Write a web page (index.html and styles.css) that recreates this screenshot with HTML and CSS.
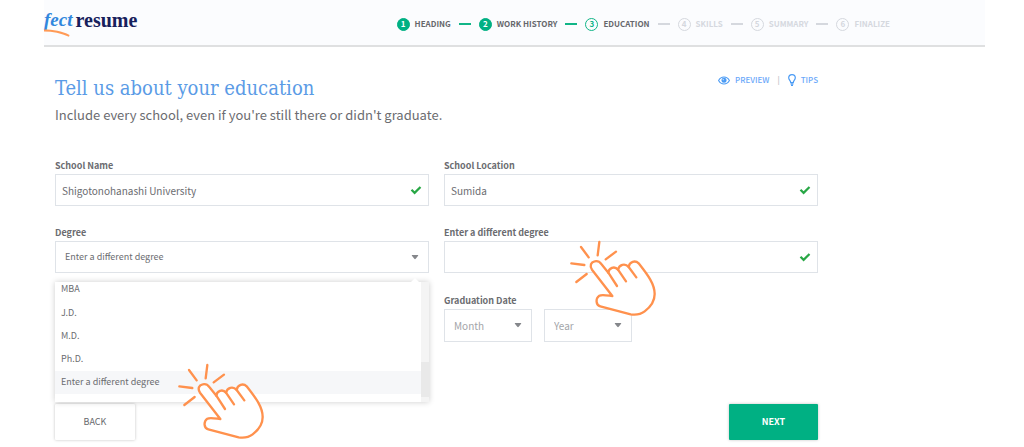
FILE: index.html
```html
<!DOCTYPE html>
<html lang="en">
<head>
<meta charset="utf-8">
<meta name="viewport" content="width=device-width, initial-scale=1">
<title>Tell us about your education</title>
<link rel="stylesheet" href="styles.css">
</head>
<body>
<svg class="sprite" aria-hidden="true">
  <symbol id="check" viewBox="0 0 12 10"><path d="M1.5 4.8 4.6 7.9 10.5 2" fill="none" stroke="#28a745" stroke-width="2.2"/></symbol>
  <symbol id="tap" viewBox="0 0 330 285">
    <g stroke="#ff914d" stroke-width="7" stroke-linecap="round" stroke-linejoin="round" fill="none">
      <path d="M118 36 113 76M63 51 86 82M168 65 137 88M34 100 73 105M80 132 49 156"/>
      <path fill="#fff" d="M157 198 96 119C88 107 93 96 104 94C112 92 119 95 124 102L145 128C146 115 163 106 174 119C177 104 195 98 206 111C208 94 226 90 236 100C260 131 284 160 284 192C284 218 270 232 254 244C242 253 231 256 212 253L121 229C107 225 106 206 118 197C125 193 140 196 157 198Z"/>
      <path d="M145 128 171 168M174 119 198 154M206 111 229 142"/>
    </g>
  </symbol>
</svg>
<div class="page">
  <header class="topbar">
    <a class="logo" href="#" aria-label="fect resume">
      <span class="logo-script">fect</span><span class="logo-word">resume</span>
      <svg class="logo-swoosh" viewBox="0 0 28 9" aria-hidden="true"><path d="M0 .5C9 .5 18 2 25.500 6L25 7.800C17 4.300 9 2.600 0 2.600Z" fill="#ff9a56"/></svg>
    </a>
    <ol class="steps">
      <li class="step done"><span class="num">1</span>HEADING</li>
      <li class="step done"><span class="num">2</span>WORK HISTORY</li>
      <li class="step current"><span class="num">3</span>EDUCATION</li>
      <li class="step"><span class="num">4</span>SKILLS</li>
      <li class="step"><span class="num">5</span>SUMMARY</li>
      <li class="step"><span class="num">6</span>FINALIZE</li>
    </ol>
  </header>
  <main class="content">
    <div class="intro">
      <div>
        <h1>Tell us about your education</h1>
        <p class="lead">Include every school, even if you're still there or didn't graduate.</p>
      </div>
      <nav class="tools">
        <a href="#"><svg class="eye" viewBox="0 0 12 9" aria-hidden="true"><path d="M.6 4.500C3.200-.1 8.800-.1 11.400 4.500 8.800 9.100 3.200 9.100.6 4.500Z" fill="none" stroke="#4a9bf5" stroke-width="1.100"/><circle cx="6" cy="4.300" r="2.500" fill="#4a9bf5"/><circle cx="5.300" cy="3.600" r=".8" fill="#b5d6fc"/></svg>PREVIEW</a>
        <span class="bar">|</span>
        <a href="#"><svg class="bulb" viewBox="0 0 8 12" aria-hidden="true"><path d="M2.700 8.500C2.700 6.800.7 6 .7 3.800A3.300 3.200 0 0 1 7.300 3.800C7.300 6 5.300 6.800 5.300 8.500Z" fill="none" stroke="#4a9bf5" stroke-width="1.200"/><path d="M2.500 9.800H5.500M3 11.300H5" stroke="#4a9bf5" stroke-width="1.200"/></svg>TIPS</a>
      </nav>
    </div>
    <form class="form">
      <div class="field">
        <label for="school">School Name</label>
        <div class="control"><input id="school" type="text" value="Shigotonohanashi University"><svg class="mark"><use href="#check"/></svg></div>
      </div>
      <div class="field">
        <label for="location">School Location</label>
        <div class="control"><input id="location" type="text" value="Sumida"><svg class="mark"><use href="#check"/></svg></div>
      </div>
      <div class="field">
        <label for="degree">Degree</label>
        <div class="control">
          <select id="degree"><option>Enter a different degree</option></select>
          <div class="menu">
            <ul class="options" role="listbox" aria-label="Degree">
              <li role="option">MBA</li>
              <li role="option">J.D.</li>
              <li role="option">M.D.</li>
              <li role="option">Ph.D.</li>
              <li role="option" aria-selected="true">Enter a different degree</li>
            </ul>
            <div class="track"><div class="thumb"></div></div>
            <svg class="tap tap-menu" aria-hidden="true"><use href="#tap"/></svg>
          </div>
        </div>
      </div>
      <div class="field">
        <label for="other">Enter a different degree</label>
        <div class="control"><input id="other" type="text"><svg class="mark"><use href="#check"/></svg><svg class="tap tap-field" aria-hidden="true"><use href="#tap"/></svg></div>
      </div>
      <div class="field date">
        <label for="month">Graduation Date</label>
        <div class="pair">
          <select id="month" class="empty"><option>Month</option></select>
          <select id="year" class="empty" aria-label="Graduation year"><option>Year</option></select>
        </div>
      </div>
      <div class="actions">
        <button type="button" class="back">BACK</button>
        <button type="submit" class="next">NEXT</button>
      </div>
    </form>
  </main>
</div>
</body>
</html>
```
FILE: styles.css
```css
* { box-sizing: border-box; }
body {
  margin: 0;
  background: #fff;
  color: #6b6c70;
  font-family: "Source Sans Pro", "Noto Sans CJK JP", sans-serif;
  font-size: 10px;
  line-height: 16px;
}
a { color: inherit; text-decoration: none; }
.sprite { position: absolute; width: 0; height: 0; }
.page { margin: 0 39px 0 44px; }

.topbar {
  display: flex;
  justify-content: space-between;
  align-items: center;
  height: 47px;
  padding: 3px 95px 0 0;
  background: #fbfcfe;
  border-bottom: 2px solid #dfe0e1;
}
.logo {
  position: relative;
  display: flex;
  gap: 3px;
  height: 36px;
  font-family: "Source Serif Pro", "Liberation Serif", serif;
  font-weight: bold;
  font-size: 20px;
  line-height: 28px;
}
.logo-script { color: #3187dd; font-size: 19px; font-style: italic; }
.logo-word { color: #17205c; }
.logo-swoosh { position: absolute; left: 0; top: 23px; width: 28px; height: 9px; }

.steps { display: flex; margin: 0; padding: 0; list-style: none; }
.step {
  display: flex;
  align-items: center;
  color: #d5d8de;
  font-size: 8px;
  font-weight: 700;
  line-height: 14px;
}
.step + .step::before {
  content: "";
  width: 12px;
  height: 2px;
  margin: 0 8px;
  background: #d5d8de;
}
.num {
  display: flex;
  align-items: center;
  justify-content: center;
  width: 13px;
  height: 13px;
  margin-right: 5px;
  border: 1px solid #d5d8de;
  border-radius: 50%;
}
.done, .current { color: #66676b; }
.step.done::before, .step.current::before { background: #11b587; }
.done .num { background: #00b083; border-color: #00b083; color: #fff; }
.current .num { border-color: #11b587; color: #11b587; }

.content { max-width: 774px; padding: 27px 0 0 11px; }
.intro { display: flex; justify-content: space-between; }
h1 {
  margin: 0;
  color: #5a9be6;
  font-family: "Roboto Slab", "DejaVu Serif Condensed", "DejaVu Serif", serif;
  font-size: 20px;
  font-weight: 300;
  line-height: 28px;
}
.lead { margin: 3px 0 0; font-size: 13px; line-height: 20px; }
.tools { display: flex; height: 12px; align-items: center; color: #6ba8fa; font-size: 8px; font-weight: 500; }
.tools a { display: flex; align-items: center; gap: 5px; }
.bar { margin: 0 8px; color: #b9bcc2; }
.eye { width: 12px; height: 9px; }
.bulb { width: 8px; height: 12px; }

.form {
  display: grid;
  grid-template-columns: 1fr 1fr;
  column-gap: 15px;
  row-gap: 18px;
  padding-top: 32px;
}
.field label { display: block; padding-top: 1px; font-size: 9px; font-weight: 700; }
.control { position: relative; }
input, select {
  display: block;
  width: 100%;
  height: 32px;
  padding: 0 6px;
  border: 1px solid #dfe3e8;
  border-radius: 0;
  background: #fff;
  color: #6b6c70;
  font: inherit;
}
select {
  appearance: none;
  padding-left: 9px;
  background: #fff url("data:image/svg+xml,%3Csvg xmlns='http://www.w3.org/2000/svg' viewBox='0 0 8 5'%3E%3Cpath d='M1.200 0h5.600q.8 0 .3.700L4.700 3.800q-.7.700-1.400 0L.9.700Q.4 0 1.200 0z' fill='%2385878b'/%3E%3C/svg%3E") no-repeat right 9px center / 8px 5px;
}
#degree { font-size: 9px; }
.mark { position: absolute; right: 7px; top: 11px; width: 12px; height: 10px; }
.menu {
  position: absolute;
  z-index: 1;
  top: 41px;
  left: 0;
  right: 0;
  display: flex;
  background: #fff;
  box-shadow: 0 0 6px rgba(0, 0, 0, .2);
}
.menu::before {
  content: "";
  position: absolute;
  right: 10px;
  top: -4px;
  border: 4px solid transparent;
  border-top: 0;
  border-bottom-color: #fff;
}
.options { flex: 1; margin: 0; padding: 0 0 8px; overflow: hidden; list-style: none; font-size: 9px; }
.options li { height: 23px; padding: 3px 6px; }
.options li:first-child { height: 20px; padding-top: 0; line-height: 14px; }
.options [aria-selected] { background: #f6f7f9; }
.track { display: flex; flex-direction: column; justify-content: flex-end; width: 8px; padding-bottom: 5px; background: #f4f4f4; }
.thumb { height: 35px; background: #e9e9e9; }
.tap { position: absolute; z-index: 2; width: 110px; height: 95px; pointer-events: none; }
.tap-menu { left: 113px; top: 71px; }
.tap-field { left: 116px; top: -11px; }

.date { grid-column: 2; padding-top: 1px; }
.pair { display: grid; grid-template-columns: 88px 88px; gap: 12px; }
.empty { height: 33px; color: #a3a5a9; }
.actions { grid-column: 1 / -1; display: flex; justify-content: space-between; padding: 44px 0 7px; }
button { height: 36px; border: 0; border-radius: 1px; font: inherit; font-size: 9px; box-shadow: 0 0 3px rgba(0, 0, 0, .25); }
.back { width: 80px; background: #fff; color: #66676b; }
.next { width: 89px; background: #00b083; color: #fff; font-weight: 700; }
```
